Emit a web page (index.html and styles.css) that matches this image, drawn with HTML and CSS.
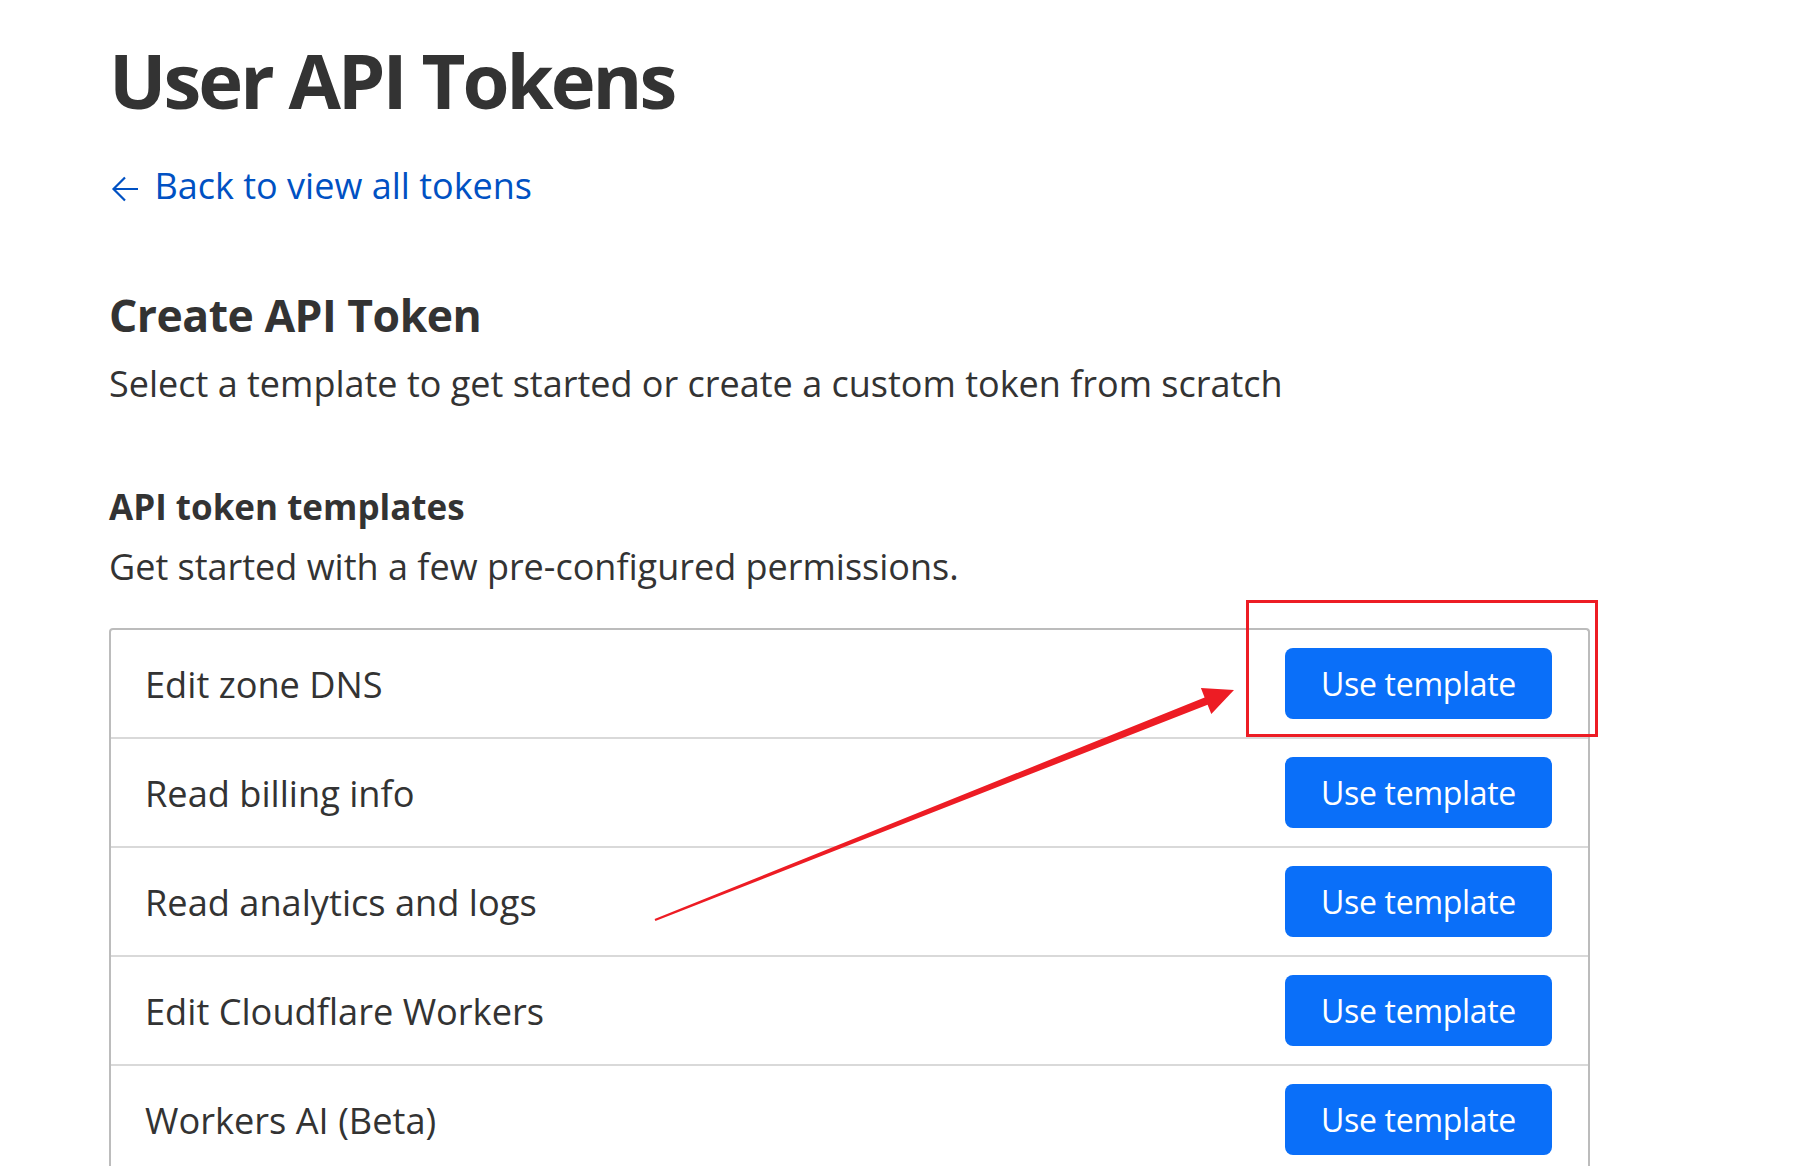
FILE: index.html
```html
<!DOCTYPE html>
<html lang="en">
<head>
<meta charset="utf-8">
<title>User API Tokens</title>
<link rel="stylesheet" href="styles.css">
</head>
<body>
<main class="page">
  <h1 class="title">User API Tokens</h1>
  <a class="back" href="#"><svg class="back-arrow" width="28" height="26" viewBox="0 0 28 26"><path d="M27 13H2.5M14 1.5L2.5 13L14 24.5" fill="none" stroke="#0051c3" stroke-width="2.2"/></svg>Back to view all tokens</a>

  <section class="create">
    <h2 class="create-title">Create API Token</h2>
    <p class="create-sub">Select a template to get started or create a custom token from scratch</p>
  </section>

  <section class="templates">
    <h3 class="templates-title">API token templates</h3>
    <p class="templates-sub">Get started with a few pre-configured permissions.</p>

    <div class="table">
      <div class="row"><span class="row-name">Edit zone DNS</span><button class="btn">Use template</button></div>
      <div class="row"><span class="row-name">Read billing info</span><button class="btn">Use template</button></div>
      <div class="row"><span class="row-name">Read analytics and logs</span><button class="btn">Use template</button></div>
      <div class="row"><span class="row-name">Edit Cloudflare Workers</span><button class="btn">Use template</button></div>
      <div class="row"><span class="row-name">Workers AI (Beta)</span><button class="btn">Use template</button></div>
    </div>
  </section>
</main>

<div class="highlight"></div>
<svg class="annot-arrow" width="1797" height="1166" viewBox="0 0 1797 1166">
  <polygon fill="#ed1c24" points="654.6,919.1 1204.6,697.4 1200.9,688.1 1234,690 1211.3,714.1 1207.6,704.8 655.4,920.9"/>
</svg>
</body>
</html>
```

FILE: styles.css
```css
html, body {
  margin: 0;
  padding: 0;
  overflow: hidden;
  background: #ffffff;
}

body {
  font-family: "Open Sans", "Noto Sans", sans-serif;
  color: #333333;
  position: relative;
  width: 1797px;
  height: 1166px;
}

.page {
  padding: 28px 0 0 109px;
  width: 1481px;
}

.title {
  margin: 0;
  font-size: 76px;
  line-height: 104px;
  font-weight: 700;
  letter-spacing: -3px;
  color: #333333;
}

.back {
  display: inline-flex;
  align-items: center;
  margin-top: 31px;
  font-size: 36px;
  line-height: 46px;
  color: #0051c3;
  text-decoration: none;
}

.back-arrow {
  margin: 6px 15.5px 0 2px;
}

.create {
  margin-top: 77px;
}

.create-title {
  margin: 0;
  font-size: 44.5px;
  line-height: 58px;
  font-weight: 700;
  letter-spacing: -0.5px;
}

.create-sub {
  margin: 17px 0 0;
  font-size: 36px;
  line-height: 46px;
}

.templates {
  margin-top: 77px;
}

.templates-title {
  margin: 0;
  font-size: 35px;
  line-height: 46px;
  font-weight: 700;
}

.templates-sub {
  margin: 14px 0 0;
  font-size: 36px;
  line-height: 46px;
}

.table {
  margin-top: 38px;
  width: 1481px;
  border: 2px solid #bcbcbc;
  border-bottom: none;
  border-radius: 4px 4px 0 0;
  box-sizing: border-box;
}

.row {
  display: flex;
  align-items: center;
  justify-content: space-between;
  height: 107px;
  padding: 0 36px 0 34px;
  border-bottom: 2px solid #d9d9d9;
}

.row-name {
  font-size: 36.2px;
  color: #333333;
}

.btn {
  width: 267px;
  height: 71px;
  border: none;
  border-radius: 8px;
  background: #0a6ff9;
  color: #ffffff;
  font-family: "Open Sans", "Noto Sans", sans-serif;
  font-size: 32px;
  letter-spacing: -0.3px;
  padding: 0;
  cursor: pointer;
}

.highlight {
  position: absolute;
  left: 1246px;
  top: 600px;
  width: 352px;
  height: 137px;
  border: 3px solid #ed1c24;
  box-sizing: border-box;
}

.annot-arrow {
  position: absolute;
  left: 0;
  top: 0;
  pointer-events: none;
}
```
